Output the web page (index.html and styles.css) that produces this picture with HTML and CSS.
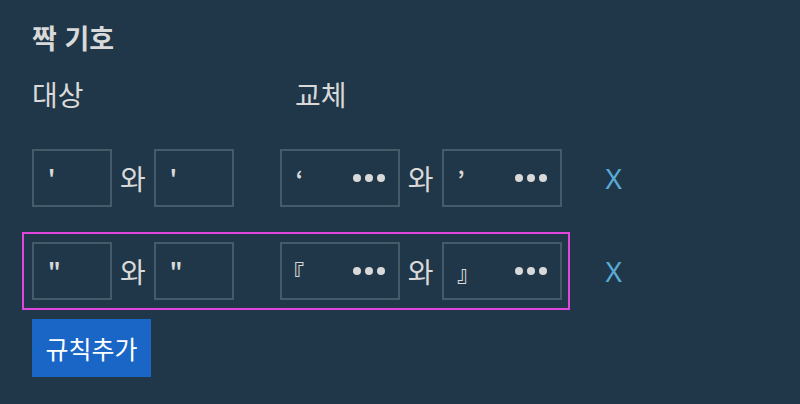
FILE: index.html
```html
<!DOCTYPE html>
<html lang="ko">
<head>
<meta charset="utf-8">
<link rel="stylesheet" href="styles.css">
</head>
<body>
<div class="page">
  <h1 class="title">짝 기호</h1>
  <div class="heads">
    <span class="head head-src">대상</span>
    <span class="head">교체</span>
  </div>
  <div class="rule">
    <div class="pairs">
      <div class="group">
        <div class="box box-src"><span class="val">'</span></div>
        <span class="and">와</span>
        <div class="box box-src"><span class="val">'</span></div>
      </div>
      <div class="group">
        <div class="box box-rep"><span class="val">‘</span><span class="more"><i></i><i></i><i></i></span></div>
        <span class="and">와</span>
        <div class="box box-rep"><span class="val">’</span><span class="more"><i></i><i></i><i></i></span></div>
      </div>
    </div>
    <span class="del">X</span>
  </div>
  <div class="rule">
    <div class="pairs active">
      <div class="group">
        <div class="box box-src"><span class="val">"</span></div>
        <span class="and">와</span>
        <div class="box box-src"><span class="val">"</span></div>
      </div>
      <div class="group">
        <div class="box box-rep"><span class="val cjk">『</span><span class="more"><i></i><i></i><i></i></span></div>
        <span class="and">와</span>
        <div class="box box-rep"><span class="val">』</span><span class="more"><i></i><i></i><i></i></span></div>
      </div>
    </div>
    <span class="del">X</span>
  </div>
  <button class="add">규칙추가</button>
</div>
</body>
</html>
```

FILE: styles.css
```css
html, body {
  margin: 0;
  padding: 0;
}
body {
  background: #1f3748;
  color: #d9d9d9;
  font-family: "Noto Sans CJK KR", "Noto Sans", sans-serif;
  width: 800px;
  height: 404px;
  overflow: hidden;
}
.page {
  padding: 20px 0 0 32px;
}
.title {
  margin: 0;
  font-size: 27px;
  font-weight: 700;
  line-height: 36px;
}
.heads {
  display: flex;
  margin-top: 20px;
  font-size: 28px;
  line-height: 36px;
}
.head-src {
  width: 263px;
}
.rule {
  display: flex;
  align-items: center;
  margin-left: -10px;
}
.heads + .rule {
  margin-top: 27px;
}
.rule + .rule {
  margin-top: 15px;
}
.pairs {
  display: flex;
  gap: 46px;
  padding: 8px 6px 8px 8px;
  border: 2px solid transparent;
}
.pairs.active {
  border-color: #e046dc;
}
.group {
  display: flex;
  align-items: center;
}
.box {
  box-sizing: border-box;
  height: 58px;
  border: 2px solid #465b69;
  display: flex;
  align-items: center;
  justify-content: space-between;
  padding: 0 13px 0 14px;
}
.box-src {
  width: 80px;
}
.box-rep {
  width: 120px;
}
.val {
  font-size: 22px;
  font-weight: 700;
  font-feature-settings: "palt";
}
.val.cjk {
  margin-left: -3px;
}
.more {
  display: flex;
  gap: 3.7px;
}
.more i {
  display: block;
  width: 8px;
  height: 8px;
  border-radius: 50%;
  background: #d9d9d9;
}
.and {
  font-size: 28px;
  margin: 0 8px;
  line-height: 36px;
}
.del {
  margin-left: 36px;
  color: #5aaad6;
  font-family: "Noto Sans", sans-serif;
  font-size: 28px;
  line-height: 36px;
}
.add {
  display: block;
  margin-top: 9px;
  height: 58px;
  width: 119px;
  padding: 0;
  border: 0;
  background: #1a66c6;
  color: #ffffff;
  font-family: "Noto Sans CJK KR", sans-serif;
  font-size: 25px;
}
```
